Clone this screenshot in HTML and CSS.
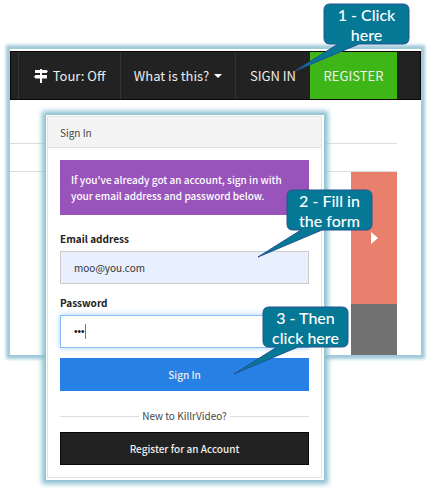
FILE: index.html
```html
<!DOCTYPE html>
<html lang="en">
<head>
<meta charset="utf-8">
<meta name="viewport" content="width=device-width, initial-scale=1">
<title>KillrVideo - Sign In</title>
<link rel="stylesheet" href="styles.css">
</head>
<body>
<svg class="defs" aria-hidden="true">
  <symbol id="bubble" viewBox="0 0 118 70">
    <path d="M36 1H109Q115 1 115 7V35Q115 41 109 41H65L1 68L44 41H36Q30 41 30 35V7Q30 1 36 1Z"/>
  </symbol>
</svg>
<main class="scene">
  <section class="page">
    <nav class="navbar">
      <a class="nav-item tour" href="#">
        <svg class="signs" viewBox="0 0 14 14" aria-hidden="true"><path d="M6 0h2v1h4.500l1.500 1.500-1.500 1.500H8v2h5v3.500H8V14H6V9.500H1.500L0 7.800 1.500 6H6V4H1V1h5z"/></svg>
        <span>Tour: Off</span>
      </a>
      <a class="nav-item what" href="#"><span>What is this?</span><i class="caret"></i></a>
      <a class="nav-item signin" href="#">SIGN IN</a>
      <a class="nav-item register" href="#">REGISTER</a>
    </nav>
    <div class="gap"></div>
    <div class="strip"></div>
    <div class="carousel">
      <button class="next" type="button" aria-label="Next"><svg viewBox="0 0 7 12" aria-hidden="true"><path d="M0 0L7 6L0 12Z"/></svg></button>
      <div class="shade"></div>
    </div>
  </section>

  <section class="modal">
    <form class="panel">
      <h1 class="panel-title">Sign In</h1>
      <div class="panel-body">
        <p class="notice">If you've already got an account, sign in with your email address and password below.</p>
        <label for="email">Email address</label>
        <input class="field filled" id="email" type="email" value="moo@you.com">
        <label for="password">Password</label>
        <div class="password">
          <input class="field active" id="password" type="password" value="moo">
          <span class="cursor"></span>
        </div>
        <button class="btn primary" type="button">Sign In</button>
        <div class="divider"><span>New to KillrVideo?</span></div>
        <button class="btn dark" type="button">Register for an Account</button>
      </div>
    </form>
  </section>

  <div class="callout one"><svg aria-hidden="true"><use href="#bubble"/></svg><p>1 - Click<br>here</p></div>
  <div class="callout two"><svg aria-hidden="true"><use href="#bubble"/></svg><p>2 - Fill in<br>the form</p></div>
  <div class="callout three"><svg aria-hidden="true"><use href="#bubble"/></svg><p>3 - Then<br>click here</p></div>
</main>
</body>
</html>
```
FILE: styles.css
```css
* { box-sizing: border-box; }

body {
  margin: 0;
  background: #fff;
  font-family: "Noto Sans CJK SC", "Open Sans", sans-serif;
  font-size: 10px;
  line-height: 16px;
  color: #444;
}

.defs { position: absolute; width: 0; height: 0; }

.scene { position: relative; padding: 49px 11px 134px 10px; }

.page {
  padding-top: 2px;
  background: #fff;
  box-shadow: 0 0 0 1px #a0cbd8, 0 0 3px 4px #a0cbd8;
}

.navbar {
  display: flex;
  height: 49px;
  padding-left: 7px;
  background: #222;
  border: 1px solid #080808;
  font-size: 13px;
}

.nav-item {
  display: flex;
  align-items: center;
  justify-content: center;
  color: #eee;
  text-decoration: none;
  border-left: 1px solid #333;
}

.tour { width: 102px; gap: 5px; }
.what { width: 115px; gap: 5px; }
.signin { width: 75px; }
.register { width: 88px; background: #3fb618; border: 0; border-right: 1px solid #3b1144; }
.signs { width: 14px; height: 14px; fill: #fff; }
.caret { border: 4px solid transparent; border-top-color: #fff; border-bottom: 0; }

.gap { height: 43px; }
.strip { height: 29px; margin-right: 24px; border: solid #ddd; border-width: 1px 0; }

.carousel { width: 46px; margin: 0 24px 0 auto; }
.next {
  display: block;
  width: 100%;
  height: 132px;
  padding: 2px 0 0;
  border: 0;
  background: #e97f6d;
}
.next svg { width: 7px; height: 12px; fill: #fff; }
.shade { height: 51px; background: #717171; }

.modal {
  position: absolute;
  top: 115px;
  left: 46px;
  right: 108px;
  padding: 1px 2px 2px 1px;
  background: #fff;
  box-shadow: 0 0 5px 4px #8bc0cf;
}

.panel { border: 1px solid #e3e3e3; }
.panel-title {
  margin: 0;
  padding: 8px 12px 6px;
  background: #f4f4f4;
  border-bottom: 1px solid #e0e0e0;
  font-size: 10px;
  font-weight: 400;
}
.panel-body {
  display: flex;
  flex-direction: column;
  padding: 12px;
}

.notice {
  margin: 0 0 16px;
  padding: 12px 11px 11px;
  background: #9954bb;
  color: #fff;
  font-weight: 500;
}

label { margin-bottom: 4px; color: #222; font-weight: 700; }

.field {
  width: 100%;
  height: 33px;
  padding: 0 13px;
  border: 1px solid #ccc;
  background: #fff;
  color: #333;
  font: inherit;
  outline: 0;
}
.filled { margin-bottom: 11px; background: #e8effd; }
.password { position: relative; display: flex; margin-bottom: 10px; }
.active {
  border-color: #86bcf5;
  box-shadow: 0 0 6px #a9d2fb;
  color: #111;
  font-family: "Liberation Sans", sans-serif;
}
.cursor { position: absolute; left: 25px; top: 9px; width: 1px; height: 15px; background: #777; }

.btn {
  height: 33px;
  padding: 0;
  border: 0;
  color: #eee;
  font: inherit;
  font-weight: 500;
}
.primary { background: #2780e3; }
.dark { background: #222; border: 1px solid #080808; }

.divider {
  display: flex;
  align-items: center;
  gap: 3px;
  margin: 17px 0 8px;
}
.divider::before, .divider::after { content: ""; flex: 1; height: 1px; background: #ddd; }

.callout { position: absolute; width: 118px; height: 70px; padding: 2px 3px 0 30px; }
.callout svg {
  position: absolute;
  inset: 0;
  width: 118px;
  height: 70px;
  fill: #057896;
  stroke: #235391;
}
.callout p {
  position: relative;
  margin: 0;
  color: #fff;
  font: 500 16px/20px Lato, sans-serif;
  text-align: center;
}
.one { top: 3px; left: 294px; }
.two { top: 189px; left: 257px; }
.three { top: 306px; left: 233px; }
```
